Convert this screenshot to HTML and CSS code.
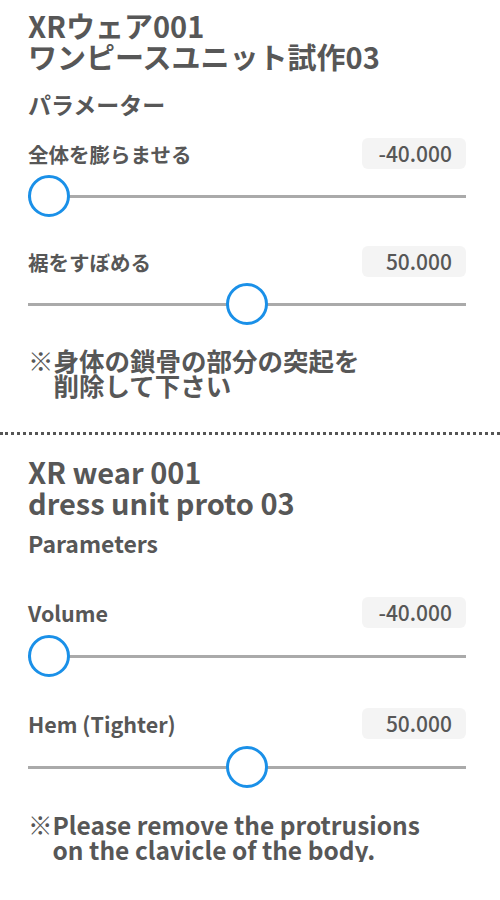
FILE: index.html
```html
<!DOCTYPE html>
<html lang="ja">
<head>
  <meta charset="UTF-8" />
  <meta name="viewport" content="width=device-width, initial-scale=1.0" />
  <title>XRウェア001</title>
  <link rel="stylesheet" href="styles.css">
</head>
<body>
  <div class="panel">
    <h1>XRウェア001<br>ワンピースユニット試作03</h1>
    <h2>パラメーター</h2>

    <div class="param">
      <div class="param-head">
        <span class="param-name">全体を膨らませる</span>
        <span class="param-value">-40.000</span>
      </div>
      <input type="range" min="-40" max="140" step="0.001" value="-40" />
    </div>

    <div class="param">
      <div class="param-head">
        <span class="param-name">裾をすぼめる</span>
        <span class="param-value">50.000</span>
      </div>
      <input type="range" min="-40" max="140" step="0.001" value="50" />
    </div>

    <p class="note">※身体の鎖骨の部分の突起を<br>削除して下さい</p>
  </div>

  <hr class="divider" />

  <div class="panel en">
    <h1>XR wear 001<br>dress unit proto 03</h1>
    <h2>Parameters</h2>

    <div class="param">
      <div class="param-head">
        <span class="param-name">Volume</span>
        <span class="param-value">-40.000</span>
      </div>
      <input type="range" min="-40" max="140" step="0.001" value="-40" />
    </div>

    <div class="param">
      <div class="param-head">
        <span class="param-name">Hem (Tighter)</span>
        <span class="param-value">50.000</span>
      </div>
      <input type="range" min="-40" max="140" step="0.001" value="50" />
    </div>

    <p class="note">※Please remove the protrusions<br>on the clavicle of the body.</p>
  </div>
</body>
</html>
```

FILE: styles.css
```css
body { margin: 0; background: #fff; color: #575757; font-family: "Noto Sans CJK JP", "Noto Sans", sans-serif; }
.panel { padding: 0 34px 0 28px; }
h1 { margin: 0; padding-top: 10px; font-size: 29px; line-height: 31px; font-weight: bold; }
h2 { margin: 17px 0 0; font-size: 23px; line-height: 30px; font-weight: bold; }
.param { margin-top: 19px; }
.param + .param { margin-top: 29px; }
.param-head { display: flex; justify-content: space-between; align-items: center; }
.param-name { font-size: 20.5px; font-weight: bold; }
.param-value { width: 104px; height: 31px; box-sizing: border-box; padding-right: 14px; background: #f4f4f4; border-radius: 6px; text-align: right; font-size: 21px; line-height: 31px; font-weight: 500; }
input[type="range"] { -webkit-appearance: none; appearance: none; display: block; width: 100%; height: 42px; margin: 6px 0 0; background: transparent; }
input[type="range"]::-webkit-slider-runnable-track { height: 3px; background: #aaa; }
input[type="range"]::-webkit-slider-thumb { -webkit-appearance: none; width: 42px; height: 42px; margin-top: -19.5px; box-sizing: border-box; border: 3.5px solid #1a90e8; border-radius: 50%; background: #fff; }
.note { margin: 22px 0 0; padding-left: 1em; text-indent: -1em; font-size: 25.5px; line-height: 25px; font-weight: bold; }
.divider { margin: 35px 0 0; height: 0; border: 0; border-top: 3px dotted #555; }
.en h1 { padding-top: 21px; }
.en h2 { margin-top: 10px; }
.en .param { margin-top: 39px; }
.en .param + .param { margin-top: 31px; }
.en input[type="range"] { margin-top: 7px; }
.en .param-name { font-size: 21.5px; }
.en .note { margin-top: 24px; font-size: 24.5px; }
```
